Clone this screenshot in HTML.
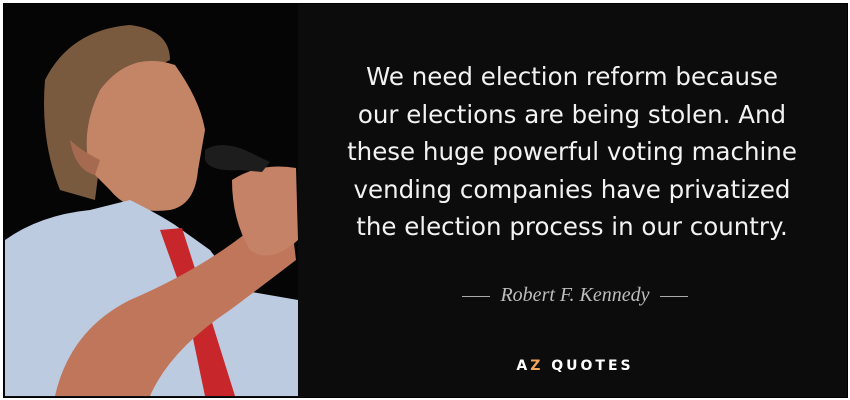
<!DOCTYPE html>
<html><head><style>
html,body{margin:0;padding:0;width:850px;height:400px;overflow:hidden;background:#fff}
.frame{position:absolute;left:3px;top:3px;width:843px;height:393px;background:#0d0c0c;border:1px solid #000}
.q{position:absolute;left:302px;top:58px;width:540px;text-align:center;color:#f2f2f2;font-family:"DejaVu Sans","Liberation Sans",sans-serif;font-size:24.5px;line-height:37.5px}
.a{position:absolute;left:440px;top:284px;width:270px;white-space:nowrap;text-align:center;color:#bdbdbd;font-family:"Liberation Serif",serif;font-style:italic;font-size:20px}
.a span{display:inline-block;width:28px;height:1px;background:#aaa;vertical-align:middle;margin:0 10px}
.logo{position:absolute;left:450px;top:358px;width:250px;text-align:center;color:#fff;font-family:"DejaVu Sans",sans-serif;font-weight:bold;font-size:14px;letter-spacing:3px}
</style></head><body>
<div class="frame"></div>
<svg style="position:absolute;left:4px;top:4px" width="294" height="392" viewBox="4 4 294 392">
<rect x="4" y="4" width="294" height="392" fill="#050505"/>
<path d="M45 80 Q70 30 130 25 Q170 30 170 60 L150 70 Q110 90 100 160 L95 200 L60 190 Q40 140 45 80Z" fill="#7a5a3e"/>
<path d="M100 90 Q130 50 175 65 Q200 100 205 130 L198 170 Q195 205 170 210 Q130 215 110 190 L90 170 Q80 130 100 90Z" fill="#c48466"/>
<path d="M70 140 Q80 150 100 160 L95 175 Q75 170 70 140Z" fill="#a66a50"/>
<path d="M5 240 Q40 215 90 210 L130 200 Q160 215 175 225 L210 250 L240 290 L298 300 L298 396 L5 396Z" fill="#bccbe0"/>
<path d="M160 230 L182 228 L205 300 L235 396 L205 396 L185 300Z" fill="#c7262a"/>
<path d="M55 396 Q70 330 130 300 Q200 270 250 230 L290 210 L296 260 Q270 280 230 310 Q170 350 150 396Z" fill="#c0765a"/>
<path d="M232 180 Q260 162 296 168 L298 240 Q270 265 250 250 Q232 220 232 180Z" fill="#c68266"/>
<path d="M205 150 Q220 140 245 150 L270 162 L262 172 L240 170 Q210 172 205 160Z" fill="#1d1d1d"/>
</svg>
<div class="q">We need election reform because<br>our elections are being stolen. And<br>these huge powerful voting machine<br>vending companies have privatized<br>the election process in our country.</div>
<div class="a"><span></span>Robert F. Kennedy<span></span></div>
<div class="logo">A<span style="color:#f0a45c">Z</span> QUOTES</div>
</body></html>
